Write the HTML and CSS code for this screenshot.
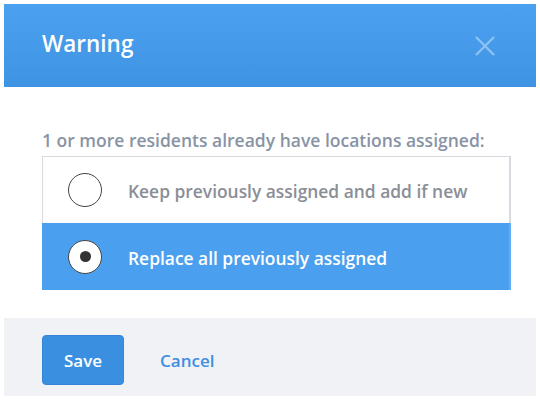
FILE: index.html
```html
<!DOCTYPE html>
<html>
<head>
<meta charset="utf-8">
<link rel="stylesheet" href="styles.css">
</head>
<body>
<div class="dialog">
  <div class="header">
    <h1 class="title">Warning</h1>
    <span class="close" aria-label="Close">
      <svg width="22" height="22" viewBox="0 0 22 22"><path d="M2 2 L20 20 M20 2 L2 20" stroke="#8cc2f2" stroke-width="2.4" fill="none"/></svg>
    </span>
  </div>
  <div class="content">
    <p class="prompt">1 or more residents already have locations assigned:</p>
    <div class="options">
      <label class="option">
        <span class="radio"></span>
        <span class="label">Keep previously assigned and add if new</span>
      </label>
      <label class="option selected">
        <span class="radio checked"></span>
        <span class="label">Replace all previously assigned</span>
      </label>
    </div>
  </div>
  <div class="footer">
    <button class="btn-save">Save</button>
    <a class="btn-cancel">Cancel</a>
  </div>
</div>
</body>
</html>
```
FILE: styles.css
```css
* { box-sizing: border-box; }
html, body { margin: 0; padding: 0; background: #fff; }
body {
  font-family: "Open Sans", Lato, sans-serif;
  padding: 4px;
}
.dialog {
  width: 532px;
  display: flex;
  flex-direction: column;
}
.header {
  height: 83px;
  background: linear-gradient(#4ba1ef, #3f93e3);
  display: flex;
  align-items: center;
  justify-content: space-between;
  padding: 0 40px 0 38px;
}
.title {
  margin: 0;
  color: #fff;
  font-size: 22.5px;
  font-weight: 600;
  padding-bottom: 4px;
}
.close { display: flex; }
.content {
  padding: 42px 25px 28px 38px;
}
.prompt {
  margin: 0 0 5px 0;
  font-size: 17.5px;
  font-weight: 600;
  color: #8893a5;
  line-height: 22px;
}
.options {
  border: 1px solid #d7dae0;
  border-right-width: 2px;
  display: flex;
  flex-direction: column;
}
.option {
  height: 66px;
  display: flex;
  align-items: center;
  padding-left: 25px;
  background: #fff;
}
.option.selected {
  background: #4a9fee;
  height: 67px;
  margin: 0 -2px -1px -1px;
  padding-left: 26px;
  border-right: 2px solid #62adf2;
}
.radio {
  width: 34px;
  height: 34px;
  border-radius: 50%;
  border: 1.5px solid #444;
  background: #fff;
  display: flex;
  align-items: center;
  justify-content: center;
  flex: none;
}
.radio.checked::after {
  content: "";
  width: 11px;
  height: 11px;
  border-radius: 50%;
  background: #333;
}
.label {
  margin-left: 26px;
  font-size: 17.4px;
  font-weight: 600;
  color: #8a8e96;
  padding-top: 2px;
}
.selected .label { color: #fff; }
.footer {
  height: 78px;
  background: #f0f2f6;
  display: flex;
  align-items: flex-start;
  padding: 17px 0 0 38px;
}
.btn-save {
  width: 82px;
  height: 50px;
  background: #3a8fe1;
  border: 1px solid #3585d6;
  border-radius: 4px;
  color: #fff;
  font-family: inherit;
  font-size: 17px;
  font-weight: 600;
  cursor: pointer;
}
.btn-cancel {
  margin-left: 36px;
  align-self: center;
  margin-top: -10px;
  font-size: 17px;
  font-weight: 600;
  color: #3d8fe0;
}
```
